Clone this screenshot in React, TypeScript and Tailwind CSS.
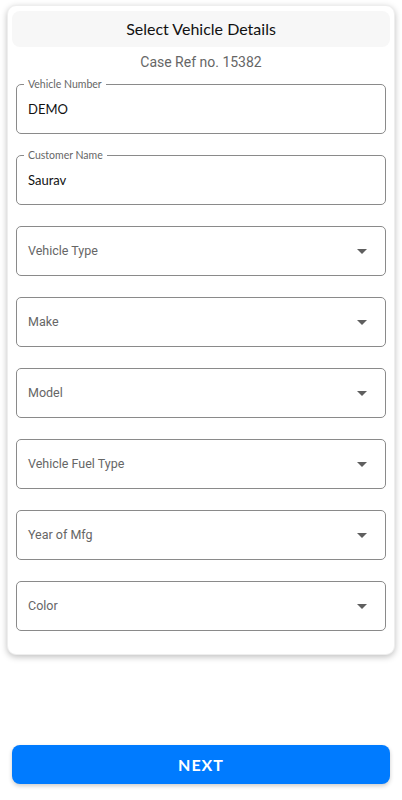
import React from "react";

function Caret() {
  return (
    <svg width="10" height="5" viewBox="0 0 10 5" className="shrink-0">
      <path d="M0 0 L10 0 L5 5 Z" fill="#5f5f5f" />
    </svg>
  );
}

function FilledField({ label, value }: { label: string; value: string }) {
  return (
    <div className="relative h-[50px] rounded-[5px] border border-[#8a8a8a] flex items-center px-[11px]">
      <span
        className="absolute -top-[7px] left-[7px] bg-white px-[4px] text-[10.5px] leading-[12px] text-[#666]"
        style={{ fontFamily: "Lato, sans-serif" }}
      >
        {label}
      </span>
      <span className="text-[13px] text-[#111] pt-[1px]" style={{ fontFamily: "Lato, sans-serif" }}>
        {value}
      </span>
    </div>
  );
}

function SelectField({ label }: { label: string }) {
  return (
    <div className="h-[50px] rounded-[5px] border border-[#8a8a8a] flex items-center justify-between pl-[11px] pr-[18px]">
      <span className="text-[12.5px] text-[#666] pt-[1px]" style={{ fontFamily: "Roboto, sans-serif" }}>
        {label}
      </span>
      <Caret />
    </div>
  );
}

export default function App() {
  return (
    <div className="w-[402px] h-[800px] bg-white flex flex-col">
      <div className="mx-[7px] mt-[5px] rounded-[9px] bg-white shadow-[0_2px_6px_rgba(0,0,0,0.25)] border border-[#eeeeee] pt-[5px] px-[4px] pb-[23px]">
        <div className="h-[36px] rounded-[8px] bg-[#f7f7f7] flex items-center justify-center">
          <span className="text-[16px] text-[#111]" style={{ fontFamily: "Lato, sans-serif" }}>
            Select Vehicle Details
          </span>
        </div>
        <div
          className="text-center text-[14px] text-[#666] mt-[5px] leading-[20px]"
          style={{ fontFamily: "Roboto, sans-serif" }}
        >
          Case Ref no. 15382
        </div>
        <div className="px-[4px] mt-[12px] flex flex-col gap-[21px]">
          <FilledField label="Vehicle Number" value="DEMO" />
          <FilledField label="Customer Name" value="Saurav" />
          <SelectField label="Vehicle Type" />
          <SelectField label="Make" />
          <SelectField label="Model" />
          <SelectField label="Vehicle Fuel Type" />
          <SelectField label="Year of Mfg" />
          <SelectField label="Color" />
        </div>
      </div>
      <div className="px-[12px] mt-[90px]">
        <button
          className="w-full h-[39px] rounded-[8px] bg-[#007bff] shadow-[0_2px_4px_rgba(0,0,0,0.2)] text-white text-[16px] font-bold tracking-[1px]"
          style={{ fontFamily: "Lato, sans-serif" }}
        >
          NEXT
        </button>
      </div>
    </div>
  );
}
